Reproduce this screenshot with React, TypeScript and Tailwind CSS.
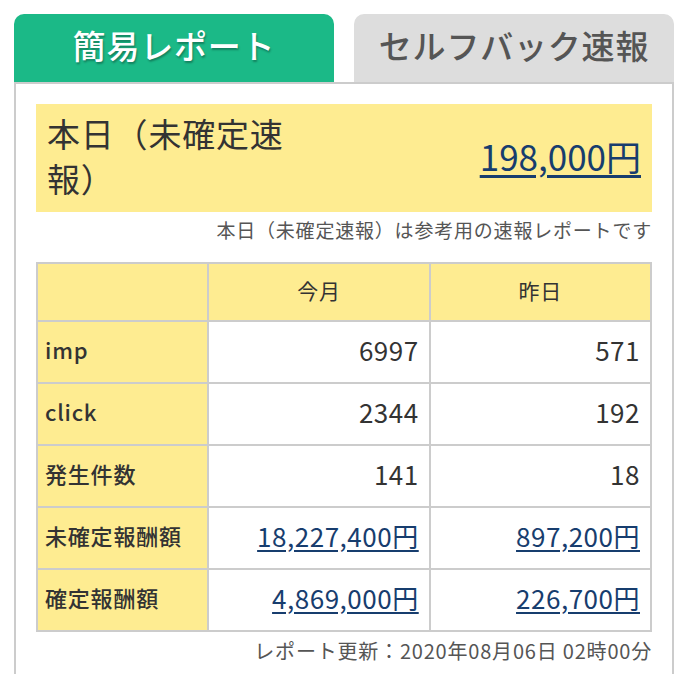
import { useState } from "react";

const rows = [
  { label: "imp", month: "6997", yesterday: "571", link: false },
  { label: "click", month: "2344", yesterday: "192", link: false },
  { label: "発生件数", month: "141", yesterday: "18", link: false },
  { label: "未確定報酬額", month: "18,227,400円", yesterday: "897,200円", link: true },
  { label: "確定報酬額", month: "4,869,000円", yesterday: "226,700円", link: true },
];

const App = () => {
  const [tab, setTab] = useState<"simple" | "selfback">("simple");

  return (
    <div
      className="min-h-[674px] bg-white pt-[14px] pl-[14px] text-[#333] tracking-[0.05em]"
      style={{ fontFamily: '"Noto Sans CJK JP", "Noto Sans", sans-serif' }}
    >
      <div className="w-[660px]">
        {/* tabs */}
        <div className="flex gap-[20px]">
          <button
            onClick={() => setTab("simple")}
            className={`h-[68px] w-[320px] rounded-t-[10px] pb-[4px] text-[33px] font-medium ${
              tab === "simple"
                ? "bg-[#1bb987] text-white [text-shadow:1px_2px_2px_rgba(0,0,0,0.3)]"
                : "bg-[#dddddd] text-[#555]"
            }`}
          >
            簡易レポート
          </button>
          <button
            onClick={() => setTab("selfback")}
            className={`h-[68px] w-[320px] rounded-t-[10px] pb-[4px] text-[33px] font-medium ${
              tab === "selfback"
                ? "bg-[#1bb987] text-white [text-shadow:1px_2px_2px_rgba(0,0,0,0.3)]"
                : "bg-[#dddddd] text-[#555]"
            }`}
          >
            セルフバック速報
          </button>
        </div>

        {/* panel */}
        <div className="border-2 border-[#cccccc] px-[20px] pt-[20px] pb-[20px]">
          <div className="flex h-[108px] items-center justify-between bg-[#feec91] px-[11px] pb-[4px]">
            <p className="w-[250px] text-[33px] leading-[45px]">本日（未確定速報）</p>
            <a href="#" className="text-[35px] text-[#173d6e] underline underline-offset-[4px] tracking-normal">
              198,000円
            </a>
          </div>
          <p className="mt-[5px] text-right text-[19px] leading-[26px] text-[#555]">
            本日（未確定速報）は参考用の速報レポートです
          </p>

          <table className="mt-[19px] w-full border-collapse border-2 border-[#cccccc]">
            <thead>
              <tr className="h-[58px] bg-[#feec91]">
                <th className="w-[172px] border-2 border-[#cccccc]"></th>
                <th className="border-2 border-[#cccccc] pb-[2px] text-[21px] font-normal">今月</th>
                <th className="border-2 border-[#cccccc] pb-[2px] text-[21px] font-normal">昨日</th>
              </tr>
            </thead>
            <tbody>
              {rows.map((r) => (
                <tr key={r.label} className="h-[62px]">
                  <td className="border-2 border-[#cccccc] bg-[#feec91] pb-[6px] pl-[7px] text-[22px] font-medium">
                    {r.label}
                  </td>
                  {[r.month, r.yesterday].map((v, i) => (
                    <td
                      key={i}
                      className="w-[222px] border-2 border-[#cccccc] pb-[6px] pr-[10px] text-right text-[26px] tracking-[0.02em]"
                    >
                      {r.link ? (
                        <a href="#" className="text-[#173d6e] underline underline-offset-[3px]">
                          {v}
                        </a>
                      ) : (
                        v
                      )}
                    </td>
                  ))}
                </tr>
              ))}
            </tbody>
          </table>

          <p className="mt-[5px] text-right text-[20px] leading-[28px] text-[#555]">
            レポート更新：2020年08月06日 02時00分
          </p>
        </div>
      </div>
    </div>
  );
};

export default App;
